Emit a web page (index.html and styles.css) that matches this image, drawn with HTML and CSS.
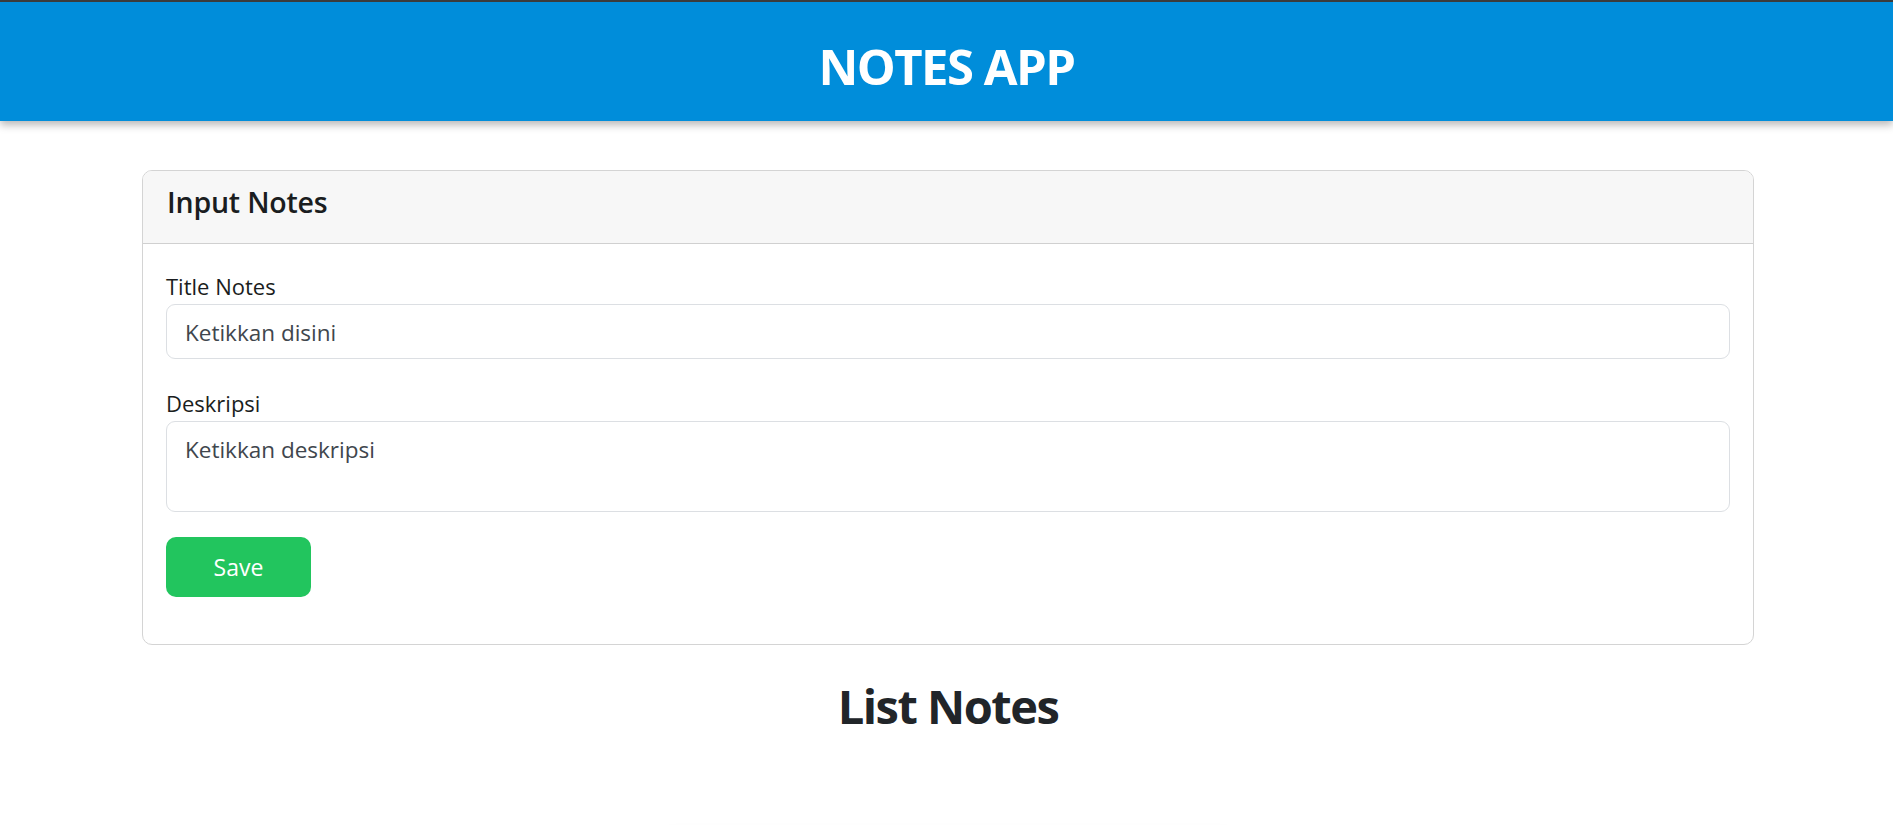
FILE: index.html
```html
<!DOCTYPE html>
<html lang="id">
<head>
<meta charset="utf-8">
<title>Notes App</title>
<link rel="stylesheet" href="styles.css">
</head>
<body>
<header class="topbar">
  <h1 class="app-title">NOTES APP</h1>
</header>
<main class="container">
  <section class="card">
    <div class="card-header">
      <h3 class="card-title">Input Notes</h3>
    </div>
    <form class="card-body">
      <div class="form-group">
        <label class="form-label" for="title">Title Notes</label>
        <input class="form-control" id="title" type="text" placeholder="Ketikkan disini">
      </div>
      <div class="form-group">
        <label class="form-label" for="desc">Deskripsi</label>
        <textarea class="form-control textarea" id="desc" placeholder="Ketikkan deskripsi"></textarea>
      </div>
      <button class="btn-save" type="button">Save</button>
    </form>
  </section>
  <h2 class="list-title">List Notes</h2>
  <div class="notes-grid">
    <div class="note-card"></div>
  </div>
</main>
</body>
</html>
```

FILE: styles.css
```css
* { box-sizing: border-box; }
html, body { margin: 0; padding: 0; background: #fff; }
body {
  font-family: "Open Sans", "Noto Sans", sans-serif;
  color: #212529;
  overflow: hidden;
}
.topbar {
  border-top: 2px solid #3b3b3b;
  background: #008dda;
  height: 121px;
  box-shadow: 0 4px 8px rgba(0, 0, 0, 0.28);
  display: flex;
  align-items: flex-start;
  justify-content: center;
  position: relative;
  z-index: 1;
}
.app-title {
  margin: 0;
  padding-top: 34px;
  color: #fff;
  font-size: 49px;
  line-height: 60px;
  font-weight: 700;
  letter-spacing: -1.5px;
}
.container {
  width: 1612px;
  margin: 49px 139px 0 142px;
}
.card {
  border: 1px solid #d4d4d4;
  border-radius: 10px;
  background: #fff;
  overflow: hidden;
}
.card-header {
  background: #f7f7f7;
  border-bottom: 1px solid #d0d0d0;
  height: 73px;
  padding: 0 24px;
}
.card-title {
  margin: 0;
  padding-top: 11px;
  font-size: 28.5px;
  line-height: 40px;
  font-weight: 600;
  color: #1a1d20;
  letter-spacing: -0.2px;
}
.card-body {
  padding: 27px 23px 47px;
  display: flex;
  flex-direction: column;
  align-items: flex-start;
}
.form-group {
  width: 100%;
  display: flex;
  flex-direction: column;
  margin-bottom: 29px;
}
.form-group:last-of-type { margin-bottom: 25px; }
.form-label {
  font-size: 22px;
  line-height: 31px;
  margin-bottom: 2px;
  color: #1a1d20;
}
.form-control {
  width: 100%;
  height: 55px;
  border: 1px solid #dcdfe3;
  border-radius: 9px;
  padding: 10px 18px 8px;
  font-family: inherit;
  font-size: 22.5px;
  line-height: 35px;
  color: #212529;
  background: #fff;
  outline: none;
  resize: none;
}
.form-control::placeholder { color: #40464d; opacity: 1; }
.textarea { height: 91px; display: block; }
.btn-save {
  width: 145px;
  height: 60px;
  border: none;
  border-radius: 10px;
  background: #22c55e;
  color: #fff;
  font-family: inherit;
  font-size: 23px;
  padding: 0;
  cursor: pointer;
}
.list-title {
  margin: 31px 0 0;
  text-align: center;
  font-size: 47px;
  line-height: 60px;
  font-weight: 700;
  letter-spacing: -1.5px;
  color: #212529;
}
.notes-grid {
  display: flex;
  justify-content: center;
  margin-top: 89px;
}
.note-card {
  width: 580px;
  height: 200px;
  border-radius: 16px;
  background: #fff;
  box-shadow: 0 5px 10px rgba(0, 0, 0, 0.05);
}
```
